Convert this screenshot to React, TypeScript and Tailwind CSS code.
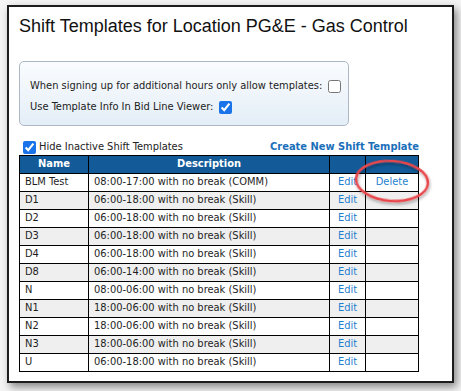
import React from 'react'

const rows = [
  { name: 'BLM Test', desc: '08:00-17:00 with no break (COMM)', del: true },
  { name: 'D1', desc: '06:00-18:00 with no break (Skill)' },
  { name: 'D2', desc: '06:00-18:00 with no break (Skill)' },
  { name: 'D3', desc: '06:00-18:00 with no break (Skill)' },
  { name: 'D4', desc: '06:00-18:00 with no break (Skill)' },
  { name: 'D8', desc: '06:00-14:00 with no break (Skill)' },
  { name: 'N', desc: '08:00-06:00 with no break (Skill)' },
  { name: 'N1', desc: '18:00-06:00 with no break (Skill)' },
  { name: 'N2', desc: '18:00-06:00 with no break (Skill)' },
  { name: 'N3', desc: '18:00-06:00 with no break (Skill)' },
  { name: 'U', desc: '06:00-18:00 with no break (Skill)' },
]

const tahoma = "font-['DejaVu_Sans_Condensed','DejaVu_Sans',sans-serif]"

export default function App() {
  return (
    <div className="relative w-[461px] h-[391px] bg-[#f4f4f4] pt-[5px] pl-[7px] overflow-hidden">
      <div className="w-[447px] h-[378px] border-2 border-[#1c1c1c] bg-white px-[10px] shadow-[3px_4px_8px_rgba(0,0,0,0.45)]">
        {/* Title */}
        <h1 className="mt-[8px] text-[18px] leading-[22px] text-[#111] font-['Liberation_Sans',Arial,sans-serif]">
          Shift Templates for Location PG&amp;E - Gas Control
        </h1>

        {/* Settings box */}
        <div
          className={`mt-[24px] w-[330px] h-[65px] rounded-[5px] border border-[#aeb8c4] bg-gradient-to-b from-[#fafcfe] to-[#e4eef7] pl-[10px] pt-[15px] text-[11px] text-[#222] ${tahoma}`}
        >
          <div className="flex items-center gap-[6px] h-[19px]">
            <span>When signing up for additional hours only allow templates:</span>
            <input type="checkbox" readOnly className="w-[13px] h-[13px] m-0" />
          </div>
          <div className="flex items-center gap-[6px] h-[19px] mt-[2px]">
            <span>Use Template Info In Bid Line Viewer:</span>
            <input type="checkbox" readOnly checked className="w-[13px] h-[13px] m-0 accent-[#1a73e8]" />
          </div>
        </div>

        {/* Toolbar */}
        <div className={`mt-[12px] w-[400px] flex items-center justify-between h-[18px] text-[11px] ${tahoma}`}>
          <label className="flex items-center gap-[3px] pl-[4px] text-[#222]">
            <input type="checkbox" readOnly checked className="w-[13px] h-[13px] m-0 accent-[#1a73e8]" />
            <span>Hide Inactive Shift Templates</span>
          </label>
          <a className="font-bold text-[#1b6fba] pr-0">Create New Shift Template</a>
        </div>

        {/* Table */}
        <table className={`mt-[-1px] w-[400px] border-collapse border border-black text-[11px] text-[#1e1e1e] ${tahoma}`}>
          <thead>
            <tr className="h-[18px] bg-[#125b98] text-white font-bold">
              <th className="w-[69px] border border-black p-0 text-center">Name</th>
              <th className="w-[241px] border border-black p-0 text-center">Description</th>
              <th className="w-[36px] border border-black p-0"></th>
              <th className="border border-black p-0"></th>
            </tr>
          </thead>
          <tbody>
            {rows.map((r, i) => (
              <tr key={r.name} className={`h-[18px] ${i % 2 === 1 ? 'bg-[#efefef]' : 'bg-white'}`}>
                <td className="border border-black px-[5px] py-0">{r.name}</td>
                <td className="border border-black px-[5px] py-0">{r.desc}</td>
                <td className="border border-black p-0 text-center text-[#1f7fd0]">Edit</td>
                <td className="border border-black p-0 text-center text-[#1f7fd0]">{r.del ? 'Delete' : ''}</td>
              </tr>
            ))}
          </tbody>
        </table>
      </div>

      {/* red highlight around Delete */}
      <svg className="absolute left-[350px] top-[154px]" width="90" height="56" viewBox="0 0 90 56">
        <defs>
          <filter id="sh" x="-20%" y="-20%" width="140%" height="160%">
            <feDropShadow dx="1" dy="2" stdDeviation="1.5" floodColor="#000" floodOpacity="0.35" />
          </filter>
        </defs>
        <ellipse cx="42" cy="27" rx="36" ry="20" transform="rotate(4 42 27)" fill="none" stroke="#e8474c" strokeWidth="2.5" filter="url(#sh)" />
      </svg>
    </div>
  )
}
